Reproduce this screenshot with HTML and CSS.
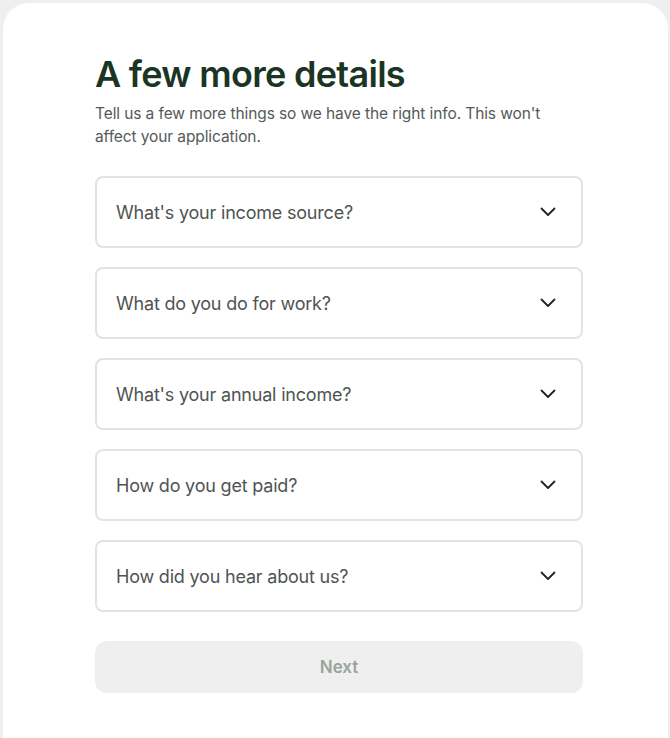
FILE: index.html
```html
<!DOCTYPE html>
<html>
<head>
<meta charset="utf-8">
<link rel="stylesheet" href="styles.css">
</head>
<body>
<div class="card">
  <div class="content">
    <h1 class="title">A few more details</h1>
    <p class="subtitle">Tell us a few more things so we have the right info. This won't affect your application.</p>
    <div class="fields">
      <div class="field"><span>What's your income source?</span><svg class="chev" width="16" height="10" viewBox="0 0 16 10"><path d="M1.5 1.5 L8 8 L14.5 1.5" fill="none" stroke="#222" stroke-width="1.8" stroke-linecap="round" stroke-linejoin="round"/></svg></div>
      <div class="field"><span>What do you do for work?</span><svg class="chev" width="16" height="10" viewBox="0 0 16 10"><path d="M1.5 1.5 L8 8 L14.5 1.5" fill="none" stroke="#222" stroke-width="1.8" stroke-linecap="round" stroke-linejoin="round"/></svg></div>
      <div class="field"><span>What's your annual income?</span><svg class="chev" width="16" height="10" viewBox="0 0 16 10"><path d="M1.5 1.5 L8 8 L14.5 1.5" fill="none" stroke="#222" stroke-width="1.8" stroke-linecap="round" stroke-linejoin="round"/></svg></div>
      <div class="field"><span>How do you get paid?</span><svg class="chev" width="16" height="10" viewBox="0 0 16 10"><path d="M1.5 1.5 L8 8 L14.5 1.5" fill="none" stroke="#222" stroke-width="1.8" stroke-linecap="round" stroke-linejoin="round"/></svg></div>
      <div class="field"><span>How did you hear about us?</span><svg class="chev" width="16" height="10" viewBox="0 0 16 10"><path d="M1.5 1.5 L8 8 L14.5 1.5" fill="none" stroke="#222" stroke-width="1.8" stroke-linecap="round" stroke-linejoin="round"/></svg></div>
    </div>
    <button class="next">Next</button>
  </div>
</div>
</body>
</html>
```
FILE: styles.css
```css
html, body {
  margin: 0;
  padding: 0;
  background: #efefef;
  height: 738px;
  overflow: hidden;
}
body {
  padding: 3px 2px 0 3px;
  box-sizing: border-box;
  font-family: Inter, "Noto Sans", sans-serif;
}
.card {
  background: #fff;
  border-radius: 26px;
  height: 760px;
  padding: 51px 0 0 92px;
  box-sizing: border-box;
}
.content {
  width: 488px;
}
.title {
  margin: 0;
  font-size: 36px;
  font-weight: 600;
  letter-spacing: -0.7px;
  color: #1b3525;
  line-height: 40px;
}
.subtitle {
  margin: 8px 0 0;
  max-width: 460px;
  font-size: 15.5px;
  line-height: 23px;
  color: #555a57;
  letter-spacing: -0.1px;
}
.fields {
  display: flex;
  flex-direction: column;
  gap: 19px;
  margin-top: 28px;
}
.field {
  height: 72px;
  box-sizing: border-box;
  border: 2px solid #e3e3e3;
  border-radius: 8px;
  display: flex;
  align-items: center;
  justify-content: space-between;
  padding: 0 25px 0 19px;
  font-size: 18px;
  color: #4f5451;
  letter-spacing: -0.2px;
}
.chev {
  display: block;
}
.next {
  margin-top: 29px;
  width: 488px;
  height: 52px;
  border: none;
  border-radius: 12px;
  background: #efefef;
  color: #9aa49e;
  font-family: Inter, sans-serif;
  font-size: 17px;
  font-weight: 600;
}
```
